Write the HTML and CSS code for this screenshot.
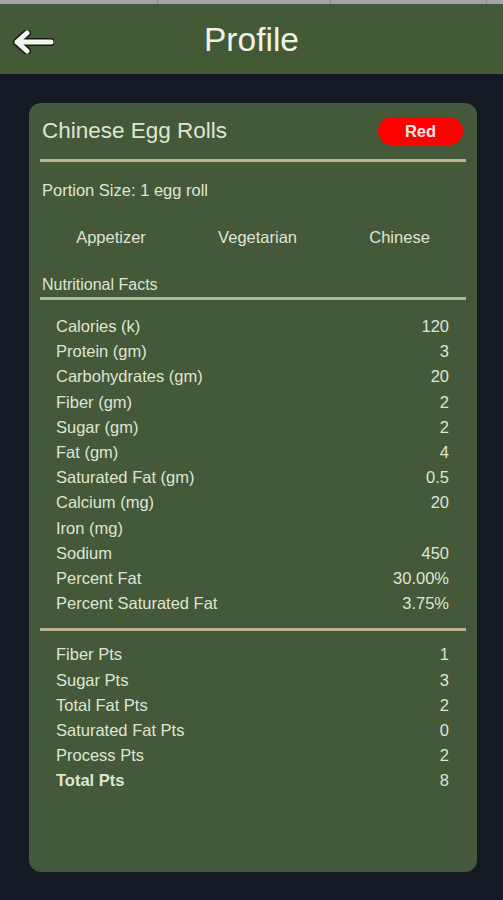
FILE: index.html
```html
<!DOCTYPE html>
<html lang="en">
<head>
    <meta charset="UTF-8">
    <title>Profile</title>
    <meta name="viewport" content="width=device-width, initial-scale=1.0">
    <link rel="stylesheet" href="styles.css">
</head>
<body>
    <div class="tabstrip">
        <span></span><span></span><span></span><span></span>
    </div>

    <header class="topbar">
        <a class="back" href="#" aria-label="Back">
            <svg width="42" height="24" viewBox="0 0 42 24">
                <path d="M15 3 L5 12 L15 21 M5 12 H39" fill="none" stroke="#15200f" stroke-width="8" stroke-linecap="round" stroke-linejoin="round"/>
                <path d="M15 3 L5 12 L15 21 M5 12 H39" fill="none" stroke="#f2f6ee" stroke-width="5" stroke-linecap="round" stroke-linejoin="round"/>
            </svg>
        </a>
        <h1>Profile</h1>
    </header>

    <main class="card">
        <div class="title-row">
            <h2>Chinese Egg Rolls</h2>
            <span class="badge">Red</span>
        </div>
        <div class="divider"></div>

        <p class="portion">Portion Size: 1 egg roll</p>

        <div class="tags">
            <span>Appetizer</span>
            <span>Vegetarian</span>
            <span>Chinese</span>
        </div>

        <p class="section-title">Nutritional Facts</p>
        <div class="divider thin-top"></div>

        <div class="facts">
            <div class="row"><span>Calories (k)</span><span>120</span></div>
            <div class="row"><span>Protein (gm)</span><span>3</span></div>
            <div class="row"><span>Carbohydrates (gm)</span><span>20</span></div>
            <div class="row"><span>Fiber (gm)</span><span>2</span></div>
            <div class="row"><span>Sugar (gm)</span><span>2</span></div>
            <div class="row"><span>Fat (gm)</span><span>4</span></div>
            <div class="row"><span>Saturated Fat (gm)</span><span>0.5</span></div>
            <div class="row"><span>Calcium (mg)</span><span>20</span></div>
            <div class="row"><span>Iron (mg)</span><span></span></div>
            <div class="row"><span>Sodium</span><span>450</span></div>
            <div class="row"><span>Percent Fat</span><span>30.00%</span></div>
            <div class="row"><span>Percent Saturated Fat</span><span>3.75%</span></div>
        </div>

        <div class="divider mid"></div>

        <div class="facts points">
            <div class="row"><span>Fiber Pts</span><span>1</span></div>
            <div class="row"><span>Sugar Pts</span><span>3</span></div>
            <div class="row"><span>Total Fat Pts</span><span>2</span></div>
            <div class="row"><span>Saturated Fat Pts</span><span>0</span></div>
            <div class="row"><span>Process Pts</span><span>2</span></div>
            <div class="row total"><span class="strong">Total Pts</span><span>8</span></div>
        </div>
    </main>
</body>
</html>
```

FILE: styles.css
```css
html, body {
    margin: 0;
    padding: 0;
}
body {
    background: #131a24;
    color: #dfe5d3;
    font-family: 'Liberation Sans', Arial, sans-serif;
    height: 900px;
    display: flex;
    flex-direction: column;
}
.tabstrip {
    height: 4px;
    background: #a4a4ac;
    display: flex;
}
.tabstrip span {
    border-right: 1px solid #8a8a92;
}
.tabstrip span:nth-child(1) { width: 157px; }
.tabstrip span:nth-child(2) { width: 172px; }
.tabstrip span:nth-child(3) { width: 155px; }
.tabstrip span:nth-child(4) { flex: 1; border-right: none; }

.topbar {
    height: 70px;
    background: #435a37;
    display: flex;
    align-items: center;
    justify-content: center;
    position: relative;
}
.topbar h1 {
    margin: 0;
    font-size: 33.5px;
    font-weight: normal;
    color: #eef2e6;
    padding-top: 2px;
}
.back {
    position: absolute;
    left: 12px;
    top: 26px;
    display: block;
    line-height: 0;
}

.card {
    margin: 29px 26px 28px 29px;
    flex: 1;
    background: #43593a;
    border-radius: 12px;
    padding: 14px 11px;
}
.title-row {
    display: flex;
    justify-content: space-between;
    align-items: center;
    height: 28px;
}
.title-row h2 {
    margin: 0 0 0 2px;
    font-size: 22.5px;
    font-weight: normal;
}
.badge {
    width: 85px;
    height: 28px;
    line-height: 28px;
    border-radius: 14px;
    background: #ff0000;
    color: #f4e6e6;
    font-weight: bold;
    font-size: 16.5px;
    text-align: center;
    margin-right: 3px;
}
.divider {
    height: 3px;
    background: #b7b68f;
    margin-top: 14px;
}
.divider.thin-top {
    margin-top: 2px;
}
.divider.mid {
    margin-top: 12px;
}
.portion {
    margin: 18px 0 0 2px;
    font-size: 16.5px;
    line-height: 20px;
}
.tags {
    display: flex;
    justify-content: space-around;
    margin-top: 27px;
    font-size: 16.5px;
    line-height: 20px;
}
.section-title {
    margin: 28px 0 0 2px;
    font-size: 16px;
    line-height: 20px;
}
.facts {
    padding: 0 17px 0 16px;
    margin-top: 14px;
}
.facts.points {
    margin-top: 11px;
}
.row {
    display: flex;
    justify-content: space-between;
    font-size: 16.5px;
    line-height: 25.2px;
}
.row .strong {
    font-weight: bold;
}
```
